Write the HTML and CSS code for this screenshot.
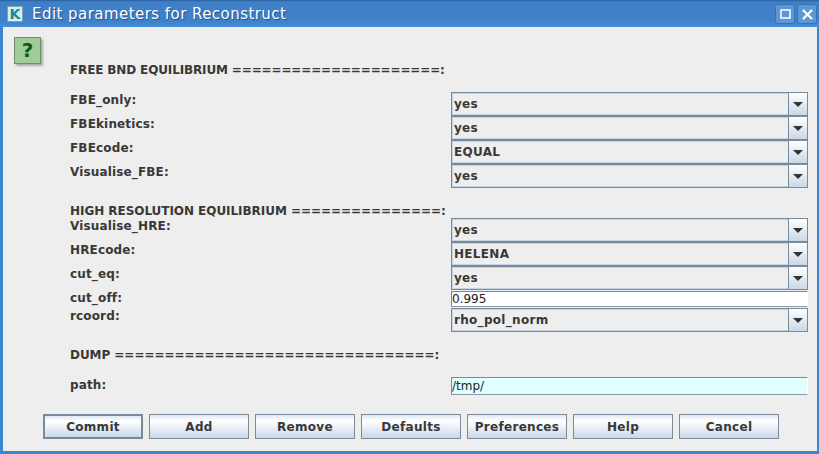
FILE: index.html
```html
<!DOCTYPE html>
<html lang="en">
<head>
  <meta charset="UTF-8" />
  <title>Edit parameters for Reconstruct</title>
  <link rel="stylesheet" href="styles.css">
</head>
<body>
<div class="window">
  <div class="titlebar">
    <span class="app-icon">K</span>
    <span class="title">Edit parameters for Reconstruct</span>
    <span class="win-btn">
      <svg width="13" height="13" viewBox="0 0 13 13"><rect x="2" y="2" width="9" height="8" fill="none" stroke="#fff" stroke-width="1.5"/></svg>
    </span>
    <span class="win-btn">
      <svg width="13" height="13" viewBox="0 0 13 13"><path d="M2 2L11 11M11 2L2 11" stroke="#fff" stroke-width="2.2"/></svg>
    </span>
  </div>

  <div class="content">
    <div class="help-btn">?</div>

    <div class="form">
      <div class="heading first">FREE BND EQUILIBRIUM =====================:</div>
      <div class="rows gap1">
        <div class="row"><label>FBE_only:</label><div class="combo"><span class="value">yes</span><span class="arrow"></span></div></div>
        <div class="row"><label>FBEkinetics:</label><div class="combo"><span class="value">yes</span><span class="arrow"></span></div></div>
        <div class="row"><label>FBEcode:</label><div class="combo"><span class="value">EQUAL</span><span class="arrow"></span></div></div>
        <div class="row"><label>Visualise_FBE:</label><div class="combo"><span class="value">yes</span><span class="arrow"></span></div></div>
      </div>

      <div class="heading second">HIGH RESOLUTION EQUILIBRIUM ===============:</div>
      <div class="rows">
        <div class="row"><label>Visualise_HRE:</label><div class="combo"><span class="value">yes</span><span class="arrow"></span></div></div>
        <div class="row"><label>HREcode:</label><div class="combo"><span class="value">HELENA</span><span class="arrow"></span></div></div>
        <div class="row"><label>cut_eq:</label><div class="combo"><span class="value">yes</span><span class="arrow"></span></div></div>
        <div class="row short"><label>cut_off:</label><div class="textbox">0.995</div></div>
        <div class="row"><label>rcoord:</label><div class="combo"><span class="value">rho_pol_norm</span><span class="arrow"></span></div></div>
      </div>

      <div class="heading third">DUMP ================================:</div>
      <div class="row path"><label>path:</label><div class="textbox cyan">/tmp/</div></div>
    </div>

    <div class="buttons">
      <button class="default">Commit</button>
      <button>Add</button>
      <button>Remove</button>
      <button>Defaults</button>
      <button>Preferences</button>
      <button>Help</button>
      <button>Cancel</button>
    </div>
  </div>
</div>
</body>
</html>
```

FILE: styles.css
```css
html, body {
  margin: 0;
  padding: 0;
}
body {
  width: 819px;
  height: 454px;
  overflow: hidden;
  font-family: "DejaVu Sans", sans-serif;
  font-size: 12px;
  font-weight: bold;
  color: #383838;
}
.window {
  height: 454px;
  box-sizing: border-box;
  display: flex;
  flex-direction: column;
  background: #eeeeee;
  border-left: 3px solid #3d85cf;
  border-right: 2px solid #3d85cf;
  border-bottom: 3px solid #3d85cf;
}
.titlebar {
  height: 27px;
  margin: 0 -2px 0 -3px;
  box-sizing: border-box;
  padding: 1px 2px 0 7px;
  display: flex;
  align-items: center;
  gap: 2px;
  background: linear-gradient(#2c5f9e 0, #3f7fc6 2px, #3f82cc 22px, #4a90dc 27px);
}
.app-icon {
  width: 16px;
  height: 16px;
  box-sizing: border-box;
  background: #d7ecec;
  border: 1px solid #7fa6b0;
  color: #188a94;
  font-size: 14px;
  line-height: 14px;
  text-align: center;
}
.title {
  flex: 1;
  margin-left: 7px;
  font-size: 15px;
  font-weight: normal;
  letter-spacing: 0.45px;
  color: #ffffff;
  text-shadow: 1px 1px 1px #1d4f8a;
}
.win-btn {
  width: 20px;
  height: 20px;
  box-sizing: border-box;
  display: flex;
  align-items: center;
  justify-content: center;
  background: #5c98d8;
  border: 1px solid #3871b0;
  border-radius: 3px;
}
.content {
  flex: 1;
  position: relative;
  display: flex;
  flex-direction: column;
}
.help-btn {
  position: absolute;
  left: 11px;
  top: 10px;
  width: 27px;
  height: 27px;
  box-sizing: border-box;
  background: #a0cc9a;
  border: 1px solid #6f8f6c;
  box-shadow: 2px 2px 2px #aaaaaa;
  color: #0d5a16;
  font-size: 20px;
  line-height: 25px;
  text-align: center;
}
.form {
  flex: 1;
  padding-left: 67px;
  padding-right: 9px;
}
.heading {
  height: 14px;
  line-height: 14px;
  white-space: nowrap;
  letter-spacing: -0.05px;
}
.heading.first {
  margin-top: 36px;
  margin-bottom: 15px;
  letter-spacing: -0.14px;
}
.heading.second {
  margin-top: 16px;
  margin-bottom: 0;
}
.heading.third {
  margin-top: 16px;
  margin-bottom: 15px;
}
.row {
  display: grid;
  grid-template-columns: 381px 1fr;
  height: 24px;
}
.row label {
  line-height: 16px;
  letter-spacing: 0.15px;
}
.row.short {
  height: 17px;
  padding-top: 1px;
}
.row.short label {
  margin-top: -1px;
}
.row.path {
  height: 18px;
}
.combo {
  display: flex;
  height: 24px;
  box-sizing: border-box;
  background: #eeeeee;
  border: 1px solid #7a8a99;
  box-shadow: inset 0 0 0 1px #c4d3e3;
}
.value {
  flex: 1;
  padding-left: 2px;
  line-height: 22px;
  letter-spacing: 0.3px;
}
.arrow {
  width: 18px;
  position: relative;
  background: linear-gradient(#ffffff, #c9d8ea);
  border-left: 1px solid #7a8a99;
}
.arrow::after {
  content: "";
  position: absolute;
  left: 4px;
  top: 9px;
  border-left: 5px solid transparent;
  border-right: 5px solid transparent;
  border-top: 5px solid #333333;
}
.textbox {
  height: 16px;
  box-sizing: border-box;
  background: #ffffff;
  border: 1px solid #7a8a99;
  border-right-color: #ffffff;
  border-bottom-color: #8c99a6;
  font-family: "DejaVu Sans", sans-serif;
  font-weight: normal;
  font-size: 12px;
  line-height: 14px;
  color: #222222;
}
.textbox.cyan {
  height: 18px;
  line-height: 16px;
  background: #e0ffff;
}
.buttons {
  display: flex;
  gap: 6px;
  padding: 0 0 12px 40px;
}
button {
  width: 100px;
  height: 25px;
  padding: 0;
  box-sizing: border-box;
  background: linear-gradient(#dfe9f4, #ffffff 25%, #c9d8ea);
  border: 1px solid #7a8a99;
  font-family: "DejaVu Sans", sans-serif;
  font-size: 12px;
  font-weight: bold;
  letter-spacing: 0.3px;
  color: #383838;
}
button.default {
  border-width: 2px;
}
```
